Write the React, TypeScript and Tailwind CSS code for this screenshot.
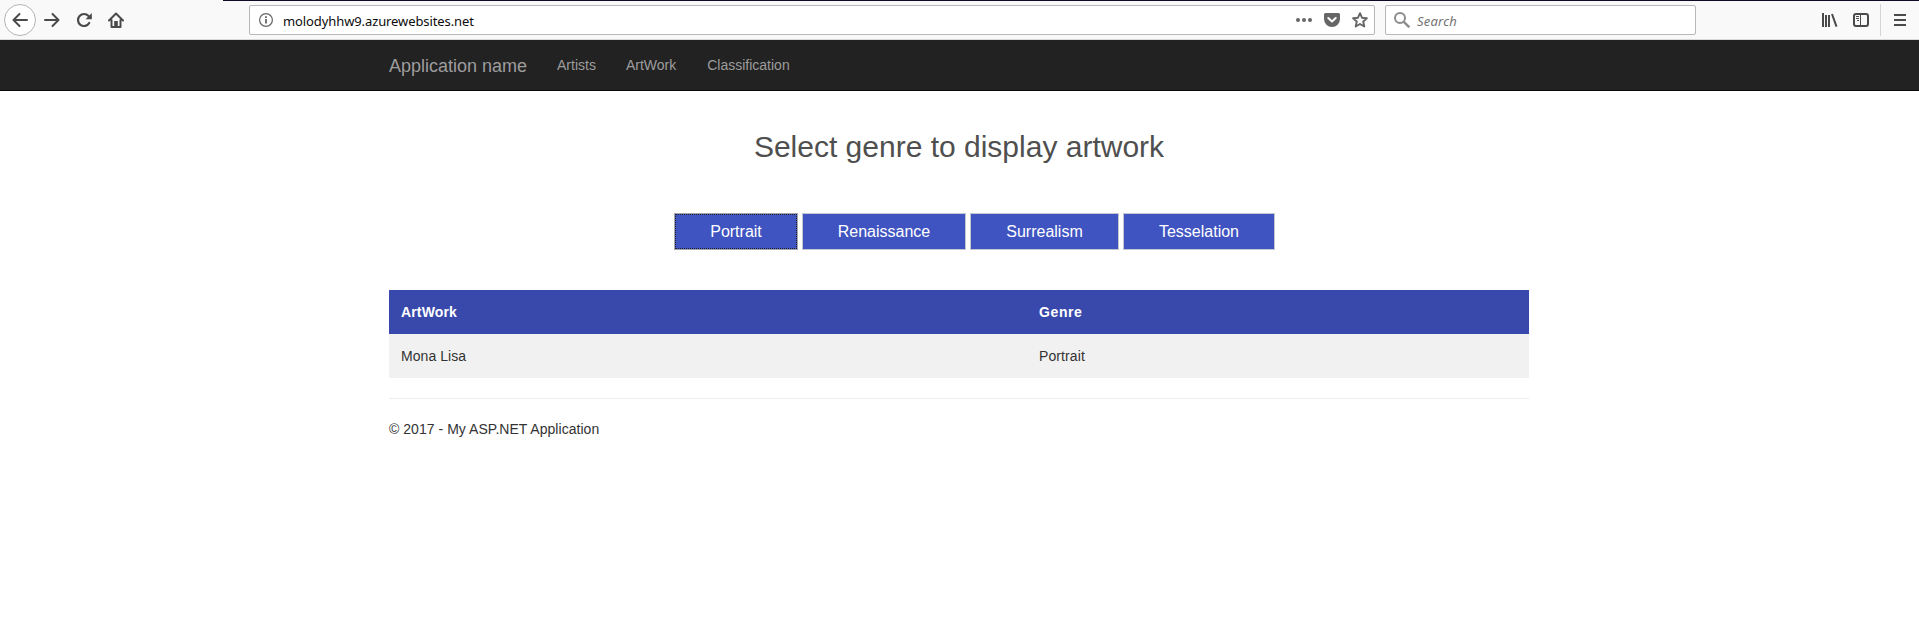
import React from "react";

const genres = [
  { name: "Portrait", width: "w-[124px]" },
  { name: "Renaissance", width: "w-[164px]" },
  { name: "Surrealism", width: "w-[149px]" },
  { name: "Tesselation", width: "w-[152px]" },
];

function Toolbar() {
  return (
    <div className="flex h-10 items-start border-b border-[#d8d8d8] bg-[#f9f9f9] pl-1 text-[#4a4a4a]">
      <div className="mt-1 flex h-8 w-[219px] items-center">
        <div className="flex size-8 items-center justify-center rounded-full border border-[#b5b5b5] bg-white">
          <svg width="16" height="16" viewBox="0 0 16 16" fill="none" stroke="currentColor" strokeWidth="2" strokeLinecap="round" strokeLinejoin="round"><path d="M15 8H1.500M7.500 2L1.500 8l6 6" /></svg>
        </div>
        <svg className="ml-2" width="16" height="16" viewBox="0 0 16 16" fill="none" stroke="currentColor" strokeWidth="2" strokeLinecap="round" strokeLinejoin="round"><path d="M1 8h13.500M8.500 2l6 6-6 6" /></svg>
        <svg className="ml-4" width="16" height="16" viewBox="0 0 16 16" fill="none" stroke="currentColor" strokeWidth="2.200" strokeLinecap="round"><path d="M13.200 11A6 6 0 1 1 12.500 4" /><path d="M15.800 1v6.200h-6.200z" fill="currentColor" stroke="none" /></svg>
        <svg className="ml-4" width="16" height="16" viewBox="0 0 16 16" fill="none" stroke="currentColor" strokeWidth="2" strokeLinecap="round" strokeLinejoin="round"><path d="M1 8.500L8 1.500l7 7M3.500 8v7h9V8" /><path d="M6.200 15V9h3.600v6z" fill="currentColor" stroke="none" /></svg>
      </div>
      <div className="flex h-full flex-1 items-start border-t border-[#0c0a25]">
        <div className="ml-[26px] mt-1 flex h-[30px] w-[1126px] items-center rounded-[2px] border border-[#b8b8b8] bg-white pl-[9px] pr-1.5 text-[#666]">
          <svg width="14" height="14" viewBox="0 0 14 14" fill="none" stroke="currentColor"><circle cx="7" cy="7" r="6.400" strokeWidth="1.200" /><path d="M7 6v4.500M7 3.300v1.700" strokeWidth="1.800" /></svg>
          <span className="ml-2.5 flex-1 pt-0.5 font-['Noto_Sans',sans-serif] text-[13px] leading-5 tracking-[-0.1px] text-[#0c0c0d]">molodyhhw9.azurewebsites.net</span>
          <svg width="16" height="16" viewBox="0 0 16 16" fill="currentColor"><circle cx="2" cy="8" r="2" /><circle cx="8" cy="8" r="2" /><circle cx="14" cy="8" r="2" /></svg>
          <svg className="ml-3" width="16" height="16" viewBox="0 0 16 16"><path d="M1.500 1h13A1.500 1.500 0 0 1 16 2.500V7A8 8 0 0 1 0 7V2.500A1.500 1.500 0 0 1 1.500 1z" fill="currentColor" /><path d="M4.300 6L8 9.500 11.700 6" fill="none" stroke="white" strokeWidth="2" strokeLinecap="round" strokeLinejoin="round" /></svg>
          <svg className="ml-3" width="16" height="16" viewBox="0 0 16 16" fill="none" stroke="currentColor" strokeWidth="1.900" strokeLinejoin="round"><path d="M8 1.200l2 4.500 4.900.5-3.700 3.300 1.100 5L8 12l-4.300 2.500 1.100-5L1.100 6.200 6 5.700z" /></svg>
        </div>
        <div className="ml-2.5 mt-1 flex h-[30px] w-[311px] items-center rounded-[2px] border border-[#b8b8b8] bg-white pl-2">
          <svg width="16" height="16" viewBox="0 0 16 16" fill="none" stroke="#8c8c8c" strokeWidth="2"><circle cx="6" cy="6" r="5" /><path d="M9.800 9.800l5.500 5.500" strokeWidth="2.400" /></svg>
          <span className="ml-[7px] pt-0.5 font-['Noto_Sans',sans-serif] text-[13px] italic leading-5 tracking-[0.2px] text-[#737373]">Search</span>
        </div>
        <div className="ml-auto mt-[3px] flex h-8 items-center">
          <svg width="16" height="16" viewBox="0 0 16 16" fill="none" stroke="currentColor" strokeWidth="2"><path d="M1 1v14M4 3v12M7 3v12" /><path d="M10 2L14.500 14.700" /></svg>
          <svg className="ml-[15px]" width="16" height="16" viewBox="0 0 16 16" fill="none" stroke="currentColor"><rect x="1" y="2" width="14" height="12" rx="2" strokeWidth="2" /><path d="M7.500 2v12" /><path d="M3 4.500h3M3 6.500h3M4 8.500h2" /></svg>
          <div className="ml-[11px] h-8 w-px bg-[#d5d5d5]" />
          <svg className="ml-[13px] mr-[13px]" width="12" height="16" viewBox="0 0 12 16" fill="none" stroke="currentColor" strokeWidth="2"><path d="M0 3h12M0 8h12M0 13h12" /></svg>
        </div>
      </div>
    </div>
  );
}

export default function App() {
  return (
    <div className="h-[640px] overflow-hidden bg-white font-['Liberation_Sans',Arial,sans-serif] text-sm leading-5 text-[#333]">
      <Toolbar />
      <nav className="flex h-[51px] border-b border-[#080808] bg-[#222] pl-[389px] text-[#9d9d9d]">
        <a className="w-[153px] py-4 text-lg leading-5">Application name</a>
        <a className="px-[15px] py-[15px]">Artists</a>
        <a className="px-[15px] py-[15px]">ArtWork</a>
        <a className="py-[15px] pl-4 pr-[15px]">Classification</a>
      </nav>
      <main className="ml-[389px] w-[1140px]">
        <h2 className="pt-[39px] text-center text-[30px] leading-[33px] text-[#4f4f4f]">Select genre to display artwork</h2>
        <div className="mt-[50px] flex gap-1 pl-[285px]">
          {genres.map((genre, index) => (
            <button
              key={genre.name}
              className={`${genre.width} h-[37px] border bg-[#4054c1] text-base leading-6 text-white ${index === 0 ? "border-[#a5a7ae] outline-1 -outline-offset-2 outline-dotted outline-[#222]" : "border-[#c4c6d0]"}`}
            >
              {genre.name}
            </button>
          ))}
        </div>
        <table className="mt-10 w-full table-fixed text-left">
          <thead>
            <tr className="h-11 bg-[#3949ab] text-white">
              <th className="w-[638px] px-3 py-0 font-bold tracking-[0.15px]">ArtWork</th>
              <th className="px-3 py-0 font-bold tracking-[0.6px]">Genre</th>
            </tr>
          </thead>
          <tbody>
            <tr className="h-11 bg-[#f1f1f1]">
              <td className="px-3 py-0 tracking-[0.05px]">Mona Lisa</td>
              <td className="px-3 py-0 tracking-[0.1px]">Portrait</td>
            </tr>
          </tbody>
        </table>
        <hr className="mt-5 border-[#eee]" />
        <footer className="mt-5 tracking-[0.04px]">© 2017 - My ASP.NET Application</footer>
      </main>
    </div>
  );
}
